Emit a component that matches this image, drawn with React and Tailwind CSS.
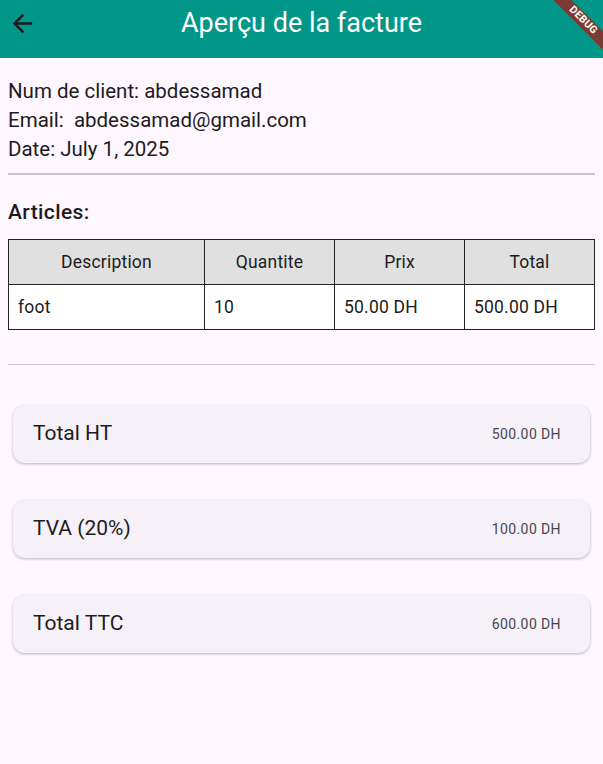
import React from 'react';

const rows = [{ description: 'foot', quantite: '10', prix: '50.00 DH', total: '500.00 DH' }];

const totals = [
  { label: 'Total HT', value: '500.00 DH' },
  { label: 'TVA (20%)', value: '100.00 DH' },
  { label: 'Total TTC', value: '600.00 DH' },
];

const App = () => {
  return (
    <div className="min-h-screen bg-[#fef7ff] text-[#1d1b20] font-['Roboto',sans-serif] overflow-hidden">
      {/* App bar */}
      <header className="relative h-[58px] bg-[#009688] flex items-center overflow-hidden">
        <div className="w-[56px] self-start pl-[8px] pt-[9px]">
          <svg width="29" height="29" viewBox="0 0 24 24" className="text-[#1d1b20]">
            <path d="M20 11H7.83l5.59-5.59L12 4l-8 8 8 8 1.41-1.41L7.83 13H20v-2z" fill="currentColor" />
          </svg>
        </div>
        <h1 className="flex-1 text-center text-white text-[27px] leading-[32px] pb-[13px]">Aperçu de la facture</h1>
        <div className="w-[56px]" />
        {/* debug banner */}
        <div className="absolute top-[14px] right-[-30px] w-[100px] h-[13px] bg-[#7b3a33] rotate-45 flex items-center justify-center">
          <span className="text-white text-[10.5px] font-bold leading-none tracking-[0.3px]">DEBUG</span>
        </div>
      </header>

      <main className="px-2">
        {/* Client info */}
        <div className="pt-[19px] text-[20.5px] leading-[29px]">
          <p>Num de client: abdessamad</p>
          <p>Email:&nbsp; abdessamad@gmail.com</p>
          <p>Date: July 1, 2025</p>
        </div>

        <div className="mt-[9px] h-[2px] bg-[#cac4d0]" />

        <h2 className="mt-[24px] text-[21px] leading-[26px] font-medium tracking-[0.4px]">Articles:</h2>

        {/* Table */}
        <table className="mt-[14px] w-full border-collapse table-fixed text-[17.5px] tracking-[0.2px]">
          <colgroup>
            <col className="w-[196px]" />
            <col />
            <col />
            <col />
          </colgroup>
          <thead>
            <tr className="bg-[#e0e0e0] h-[45px]">
              {['Description', 'Quantite', 'Prix', 'Total'].map((h) => (
                <th key={h} className="border border-[#222] font-normal text-center">
                  {h}
                </th>
              ))}
            </tr>
          </thead>
          <tbody>
            {rows.map((r) => (
              <tr key={r.description} className="bg-white h-[45px]">
                <td className="border border-[#222] px-[9px]">{r.description}</td>
                <td className="border border-[#222] px-[9px]">{r.quantite}</td>
                <td className="border border-[#222] px-[9px]">{r.prix}</td>
                <td className="border border-[#222] px-[9px]">{r.total}</td>
              </tr>
            ))}
          </tbody>
        </table>

        <div className="mt-[34px] h-px bg-[#cac4d0]" />

        {/* Totals */}
        <div className="mt-[40px] flex flex-col gap-[37px] px-[5px]">
          {totals.map((t) => (
            <div
              key={t.label}
              className="h-[58px] rounded-[12px] bg-[#f6f1f8] shadow-[0_1px_3px_rgba(0,0,0,0.28)] flex items-center justify-between pl-[20px] pr-[29px]"
            >
              <span className="text-[21px]">{t.label}</span>
              <span className="text-[14px] text-[#49454f] tracking-[0.4px]">{t.value}</span>
            </div>
          ))}
        </div>
      </main>
    </div>
  );
};

export default App;
